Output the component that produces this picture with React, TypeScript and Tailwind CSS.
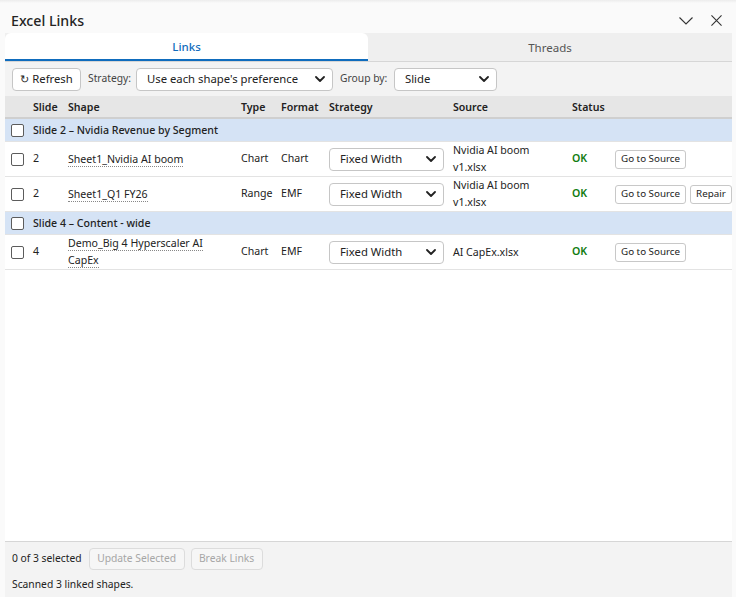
import React from 'react';

type Row = {
  kind: 'group' | 'item';
  label?: string;
  slide?: number;
  shape?: string;
  type?: string;
  format?: string;
  source?: string;
  repair?: boolean;
};

const rows: Row[] = [
  { kind: 'group', label: 'Slide 2 – Nvidia Revenue by Segment' },
  { kind: 'item', slide: 2, shape: 'Sheet1_Nvidia AI boom', type: 'Chart', format: 'Chart', source: 'Nvidia AI boom v1.xlsx' },
  { kind: 'item', slide: 2, shape: 'Sheet1_Q1 FY26', type: 'Range', format: 'EMF', source: 'Nvidia AI boom v1.xlsx', repair: true },
  { kind: 'group', label: 'Slide 4 – Content - wide' },
  { kind: 'item', slide: 4, shape: 'Demo_Big 4 Hyperscaler AI CapEx', type: 'Chart', format: 'EMF', source: 'AI CapEx.xlsx' },
];

const cols = 'grid grid-cols-[28px_35px_173px_40px_48px_124px_119px_43px_117px]';

function Chevron({ className = '' }: { className?: string }) {
  return (
    <svg viewBox="0 0 10 6" className={className} fill="none" stroke="#222" strokeWidth="1.8" strokeLinecap="round" strokeLinejoin="round">
      <path d="M1 1l4 4 4-4" />
    </svg>
  );
}

function Select({ value, className = '' }: { value: string; className?: string }) {
  return (
    <div className={`flex h-[23px] items-center justify-between rounded-[4px] border border-[#c6c6c6] bg-white pl-[10px] pr-[7px] text-[11.3px] text-[#222] ${className}`}>
      <span>{value}</span>
      <Chevron className="h-[6px] w-[10px]" />
    </div>
  );
}

function Checkbox() {
  return <div className="h-[13px] w-[13px] rounded-[2px] border border-[#5c5c5c] bg-white" />;
}

function SmallButton({ children }: { children: React.ReactNode }) {
  return (
    <div className="flex h-[19px] items-center whitespace-nowrap rounded-[3px] border border-[#c8c8c8] bg-white px-[5px] text-[9.8px] text-[#222]">
      {children}
    </div>
  );
}

export default function App() {
  return (
    <div
      className="flex h-[597px] w-[736px] flex-col overflow-hidden bg-[#fafafa] text-[#222]"
      style={{ fontFamily: '"Segoe UI", "Noto Sans", sans-serif' }}
    >
      <div className="h-[3px] bg-gradient-to-b from-[#ececec] to-[#fafafa]" />
      <div className="flex h-[30px] items-center justify-between pl-[11px] pr-[14px] pt-[5px]">
        <h1 className="text-[14.2px] font-medium text-[#242424]">Excel Links</h1>
        <div className="flex items-center gap-[18px]">
          <svg viewBox="0 0 14 8" className="h-[8px] w-[14px]" fill="none" stroke="#333" strokeWidth="1.1">
            <path d="M0.5 0.5l6.5 6.5 6.5-6.5" />
          </svg>
          <svg viewBox="0 0 12 12" className="h-[11px] w-[11px]" fill="none" stroke="#333" strokeWidth="1.2">
            <path d="M0.5 0.5l11 11M11.5 0.5l-11 11" />
          </svg>
        </div>
      </div>

      <div className="ml-[5px] flex w-[727px] flex-1 flex-col">
        <div className="flex h-[29px] border-b border-[#d6d6d6] bg-[#efefef]">
          <div className="flex w-[363px] items-center justify-center rounded-t-[6px] border-b-2 border-[#0f6cbd] bg-white pt-[2px] text-[11.5px] font-medium text-[#0f6cbd]">
            Links
          </div>
          <div className="flex flex-1 items-center justify-center pt-[2px] text-[11.5px] text-[#555]">Threads</div>
        </div>

        <div className="flex h-[34px] items-center bg-[#f3f3f3] pl-[7px]">
          <div className="flex h-[23px] w-[69px] items-center justify-center gap-[3px] rounded-[4px] border border-[#c6c6c6] bg-white text-[11.3px]">
            <span className="text-[11px]">↻</span>
            <span>Refresh</span>
          </div>
          <span className="ml-[7px] w-[48px] text-[10.3px] text-[#444]">Strategy:</span>
          <Select value="Use each shape's preference" className="w-[197px]" />
          <span className="ml-[7px] w-[54px] text-[10.3px] text-[#444]">Group by:</span>
          <Select value="Slide" className="w-[103px]" />
        </div>

        <div className={`${cols} h-[23px] items-center border-b-2 border-[#cfcfcf] bg-[#e6e6e6] pt-[2px] text-[10.6px] font-semibold text-[#222]`}>
          <div />
          <div>Slide</div>
          <div>Shape</div>
          <div>Type</div>
          <div>Format</div>
          <div>Strategy</div>
          <div>Source</div>
          <div>Status</div>
          <div />
        </div>

        <div className="flex-1 bg-white">
          {rows.map((r, i) =>
            r.kind === 'group' ? (
              <div key={i} className="flex h-[23px] items-center border-b border-[#e3e3e3] bg-[#d5e3f5] pt-[1px] text-[10.6px] font-medium text-[#222]">
                <div className="flex w-[28px] pl-[6px]">
                  <Checkbox />
                </div>
                <div>{r.label}</div>
              </div>
            ) : (
              <div key={i} className={`${cols} h-[35px] items-center border-b border-[#e3e3e3] text-[10.6px] text-[#222]`}>
                <div className="flex pl-[6px]">
                  <Checkbox />
                </div>
                <div>{r.slide}</div>
                <div className="w-[140px] leading-[17px]">
                  <span className="border-b border-dotted border-[#888]">{r.shape}</span>
                </div>
                <div>{r.type}</div>
                <div>{r.format}</div>
                <div>
                  <Select value="Fixed Width" className="w-[115px]" />
                </div>
                <div className="w-[90px] leading-[17px]">{r.source}</div>
                <div className="font-semibold text-[#107c10]">OK</div>
                <div className="flex gap-[4px]">
                  <SmallButton>Go to Source</SmallButton>
                  {r.repair ? <SmallButton>Repair</SmallButton> : null}
                </div>
              </div>
            )
          )}
        </div>

        <div className="flex h-[56px] flex-col border-t border-[#d6d6d6] bg-[#f3f3f3] pl-[7px] text-[10.3px] text-[#222]">
          <div className="flex h-[33px] items-center gap-[6px] pt-[1px]">
            <span>0 of 3 selected</span>
            <div className="ml-[1px] flex h-[22px] w-[96px] items-center justify-center rounded-[4px] border border-[#dcdcdc] bg-[#f6f6f6] text-[#a6a6a6]">Update Selected</div>
            <div className="flex h-[22px] w-[72px] items-center justify-center rounded-[4px] border border-[#dcdcdc] bg-[#f6f6f6] text-[#a6a6a6]">Break Links</div>
          </div>
          <div className="flex h-[20px] items-center">Scanned 3 linked shapes.</div>
        </div>
      </div>
    </div>
  );
}
